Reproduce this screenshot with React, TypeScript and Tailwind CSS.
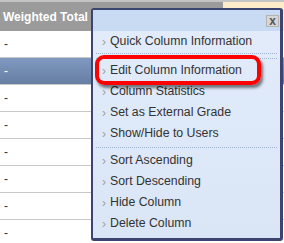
const rows = [0, 1, 2, 3, 4, 5, 6, 7];
const firstGroup = ["Edit Column Information", "Column Statistics", "Set as External Grade", "Show/Hide to Users"];
const secondGroup = ["Sort Ascending", "Sort Descending", "Hide Column", "Delete Column"];

function MenuItem({ label }: { label: string }) {
  return (
    <div className="flex h-[21px] items-center pl-[9px] text-[12.3px] text-[#333]">
      <span className="w-[8px] text-[12px] leading-none text-[#a0a0a0]">›</span>
      <span className="whitespace-nowrap">{label}</span>
    </div>
  );
}

export default function App() {
  return (
    <div className="relative h-[243px] w-[284px] overflow-hidden bg-white font-['Liberation_Sans',Arial,sans-serif]">
      {/* grade table */}
      <div className="flex h-[31px] border-t-2 border-[#c4c4c4]">
        <div className="flex w-[223px] items-center bg-[#9b9b9b] pl-[3px] text-[12px] font-bold text-white">
          Weighted Total
        </div>
        <div className="flex-1 bg-[#fdecca]" />
      </div>
      {rows.map((r) => (
        <div
          key={r}
          className={
            r === 1
              ? "flex h-[27px] items-center border-b border-[#c8c8c8] bg-gradient-to-b from-[#7f99c0] to-[#687ea3] pl-[4px] text-[12px] text-white"
              : "flex h-[27px] items-center border-b border-[#c8c8c8] pl-[4px] text-[12px] text-[#333]"
          }
        >
          -
        </div>
      ))}

      {/* context menu */}
      <div className="absolute left-[91px] top-[8px] h-[233px] w-[192px] overflow-hidden rounded-[3px] border-2 border-r-[3px] border-b-[3px] border-[#3c456f] bg-gradient-to-b from-[#e2ecfb] to-[#dae5f6]">
        <div className="flex h-[21px] justify-end bg-[#c9dbf2] pr-[1px] pt-[5px]">
          <div className="flex h-[12px] w-[13px] items-center justify-center border border-[#b3b3b3] bg-[#d6d6d6] text-[12px] font-bold leading-none text-[#555]">
            x
          </div>
        </div>
        <MenuItem label="Quick Column Information" />
        <div className="mx-[3px] mt-[1px] border-t border-dotted border-[#9fb4d0]" />
        <div className="mx-[3px] mt-[4px] border-t border-dotted border-[#9fb4d0]" />
        <div className="mt-[1px]">
          {firstGroup.map((l) => (
            <MenuItem key={l} label={l} />
          ))}
        </div>
        <div className="mx-[3px] mt-[3px] border-t border-dotted border-[#9fb4d0]" />
        <div className="mt-[2px]">
          {secondGroup.map((l) => (
            <MenuItem key={l} label={l} />
          ))}
        </div>
      </div>

      {/* highlight annotation */}
      <div className="absolute left-[95px] top-[55px] h-[30px] w-[166px] rounded-[9px] border-4 border-[#ff0000] shadow-[2px_3px_3px_rgba(0,0,0,0.5)]" />
    </div>
  );
}
